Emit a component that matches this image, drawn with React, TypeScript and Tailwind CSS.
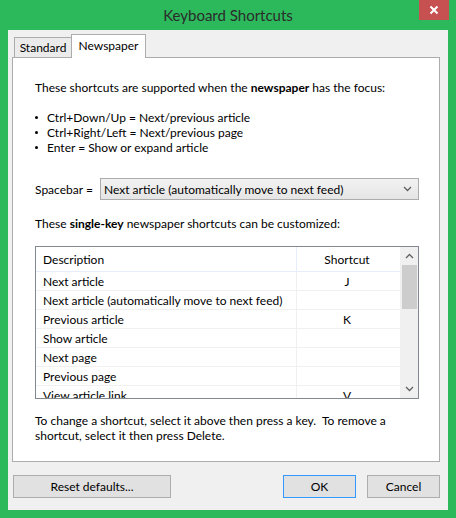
import React from "react";

const rows: [string, string][] = [
  ["Next article", "J"],
  ["Next article (automatically move to next feed)", ""],
  ["Previous article", "K"],
  ["Show article", ""],
  ["Next page", ""],
  ["Previous page", ""],
  ["View article link", "V"],
];

function Chevron({ up }: { up?: boolean }) {
  return (
    <svg width="9" height="6" viewBox="0 0 9 6" className="block">
      <path
        d={up ? "M1 5 L4.5 1.5 L8 5" : "M1 1 L4.5 4.5 L8 1"}
        fill="none"
        stroke="#606060"
        strokeWidth="1.3"
      />
    </svg>
  );
}

export default function App() {
  return (
    <div
      className="w-[456px] h-[518px] bg-[#2bb95b] flex flex-col text-black"
      style={{ fontFamily: "Lato, 'Liberation Sans', sans-serif" }}
    >
      {/* title bar */}
      <div className="relative h-[30px] shrink-0 flex items-center justify-center">
        <span className="text-[15px] text-[#2b2b2b] leading-none">Keyboard Shortcuts</span>
        <div className="absolute top-0 right-[7px] w-[30px] h-[20px] bg-[#c75050] flex items-center justify-center">
          <svg width="10" height="10" viewBox="0 0 10 10">
            <path d="M1.5 1.5 L8.5 8.5 M8.5 1.5 L1.5 8.5" stroke="#fff" strokeWidth="2" />
          </svg>
        </div>
      </div>

      {/* client */}
      <div className="mx-[8px] mb-[8px] flex-1 bg-[#f0f0f0] flex flex-col pl-[4px] pr-[8px] pt-[4px]">
        {/* tabs */}
        <div className="flex items-end h-[23px] pl-[2px] relative z-10">
          <div className="h-[20px] w-[58px] border border-b-0 border-[#acacac] bg-[#ebebeb] text-[12px] flex items-center justify-center">
            Standard
          </div>
          <div className="h-[24px] w-[75px] -ml-[1px] -mb-[1px] border border-b-0 border-[#acacac] bg-white text-[12px] flex items-start justify-center pt-[2px]">
            Newspaper
          </div>
        </div>

        {/* panel */}
        <div className="h-[405px] border border-[#acacac] bg-white pl-[22px] pr-[20px] text-[12px] leading-[15px]">
          <div className="mt-[22px]">
            These shortcuts are supported when the <b className="font-bold">newspaper</b> has the focus:
          </div>
          <ul className="mt-[15px]">
            {[
              "Ctrl+Down/Up = Next/previous article",
              "Ctrl+Right/Left = Next/previous page",
              "Enter = Show or expand article",
            ].map((t) => (
              <li key={t} className="flex items-center h-[15px]">
                <span className="w-[12px] flex items-center">
                  <span className="w-[3px] h-[3px] rounded-full bg-black inline-block" />
                </span>
                {t}
              </li>
            ))}
          </ul>

          <div className="mt-[23px] flex items-center h-[22px]">
            <span className="w-[65px]">Spacebar =</span>
            <div className="w-[319px] h-[22px] border border-[#acacac] bg-gradient-to-b from-[#f2f2f2] to-[#e5e5e5] flex items-center pl-[3px] pr-[6px]">
              <span className="flex-1">Next article (automatically move to next feed)</span>
              <Chevron />
            </div>
          </div>

          <div className="mt-[16px]">
            These <b className="font-bold">single-key</b> newspaper shortcuts can be customized:
          </div>

          {/* list view */}
          <div className="mt-[15px] w-[384px] h-[153px] border border-[#828790] flex overflow-hidden">
            <div className="flex-1 flex flex-col overflow-hidden">
              <div className="h-[25px] shrink-0 flex border-b border-[#e5eefa]">
                <div className="w-[261px] pl-[7px] flex items-center border-r border-[#e5eefa]">Description</div>
                <div className="flex-1 flex items-center justify-center pr-[3px]">Shortcut</div>
              </div>
              {rows.map(([d, k]) => (
                <div key={d} className="h-[19px] shrink-0 flex border-b border-[#f0f0f0]">
                  <div className="w-[261px] pl-[7px] flex items-center border-r border-[#f0f0f0]">{d}</div>
                  <div className="flex-1 flex items-center justify-center pr-[3px]">{k}</div>
                </div>
              ))}
            </div>
            <div className="w-[18px] shrink-0 bg-[#f0f0f0] flex flex-col items-center">
              <div className="h-[18px] flex items-center justify-center">
                <Chevron up />
              </div>
              <div className="w-[15px] h-[44px] bg-[#cdcdcd]" />
              <div className="flex-1" />
              <div className="h-[18px] flex items-center justify-center">
                <Chevron />
              </div>
            </div>
          </div>

          <div className="mt-[14px]">
            To change a shortcut, select it above then press a key.&nbsp; To remove a
            <br />
            shortcut, select it then press Delete.
          </div>
        </div>

        {/* buttons */}
        <div className="mt-[13px] flex items-center text-[12px] pl-[1px]">
          <div className="w-[158px] h-[23px] border border-[#adadad] bg-[#e1e1e1] flex items-center justify-center">
            Reset defaults...
          </div>
          <div className="flex-1" />
          <div className="w-[73px] h-[23px] border border-[#3399ff] bg-[#e1e1e1] flex items-center justify-center">
            OK
          </div>
          <div className="w-[73px] h-[23px] ml-[11px] border border-[#adadad] bg-[#e1e1e1] flex items-center justify-center">
            Cancel
          </div>
        </div>
      </div>
    </div>
  );
}
